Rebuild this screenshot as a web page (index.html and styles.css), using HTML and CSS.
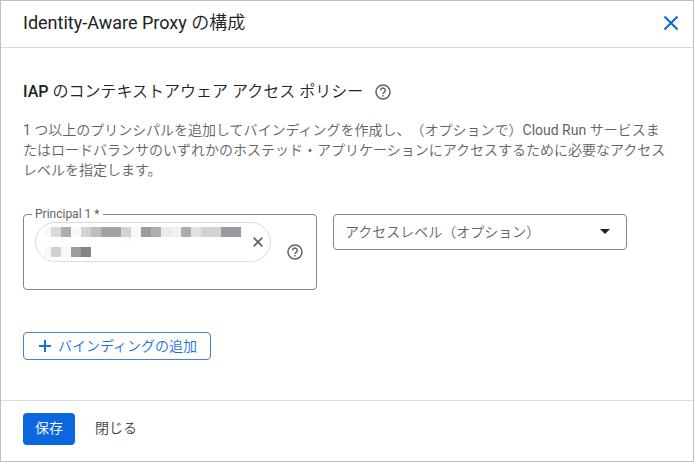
FILE: index.html
```html
<!DOCTYPE html>
<html lang="ja">
<head>
  <meta charset="UTF-8">
  <title>Identity-Aware Proxy の構成</title>
  <meta name="viewport" content="width=device-width, initial-scale=1.0">
  <link rel="stylesheet" href="styles.css">
</head>
<body>
  <form class="panel">
    <header class="panel-header">
      <h1>Identity-Aware Proxy の構成</h1>
      <button type="button" class="icon-button close" aria-label="閉じる">
        <svg width="16" height="16" viewBox="0 0 16 16"><path d="M1.5 1.5l13 13M14.5 1.5l-13 13" stroke="currentColor" stroke-width="2"/></svg>
      </button>
    </header>

    <main class="panel-body">
      <div class="section-title">
        <h2>IAP <span>のコンテキストアウェア アクセス ポリシー</span></h2>
        <button type="button" class="icon-button" aria-label="ヘルプ">
          <svg width="16" height="16" viewBox="0 0 16 16" fill="none" stroke="currentColor" stroke-width="1.5"><circle cx="8" cy="8" r="7"/><path d="M5.7 6.4a2.3 2.3 0 1 1 3.7 1.8C8.5 8.8 8 9.2 8 10.1"/><path d="M8 11v1.5"/></svg>
        </button>
      </div>
      <p class="description">1 つ以上のプリンシパルを追加してバインディングを作成し、（オプションで）Cloud Run サービスまたはロードバランサのいずれかのホステッド・アプリケーションにアクセスするために必要なアクセスレベルを指定します。</p>

      <div class="binding">
        <fieldset class="principal">
          <legend><label for="principal">Principal 1 *</label></legend>
          <div class="principal-entry">
            <div class="chip">
              <svg class="masked" width="197" height="30" viewBox="0 0 197 30" shape-rendering="crispEdges">
                <path fill="#f8f8f8" d="M0 0h7v10H0zM27 0h10v10H27zM87 0h10v10H87zM0 20h7v10H0zM17 20h10v10H17z"/>
                <path fill="#d8d9db" d="M7 0h10v10H7z"/>
                <path fill="#adaeb0" d="M17 0h10v10H17zM107 0h10v10h-10zM137 0h10v10h-10z"/>
                <path fill="#d1d2d4" d="M37 0h10v10H37zM77 0h10v10H77zM157 0h20v10h-20zM7 20h10v10H7z"/>
                <path fill="#bdbec0" d="M47 0h10v10H47z"/>
                <path fill="#a3a4a7" d="M57 0h20v10H57z"/>
                <path fill="#999da1" d="M97 0h10v10H97zM177 0h20v10h-20zM27 20h10v10H27z"/>
                <path fill="#e9eaea" d="M117 0h10v10h-10z"/>
                <path fill="#eef1f0" d="M127 0h10v10h-10z"/>
                <path fill="#e2e2e2" d="M147 0h10v10h-10z"/>
                <path fill="#fcfcfc" d="M77 10h10v9H77z"/>
                <path fill="#838689" d="M37 20h10v10H37z"/>
              </svg>
              <button type="button" class="icon-button" aria-label="削除">
                <svg width="10" height="10" viewBox="0 0 10 10"><path d="M.7.7l8.6 8.6M9.3.7L.7 9.3" stroke="currentColor" stroke-width="1.7"/></svg>
              </button>
            </div>
            <input type="text" id="principal">
          </div>
          <button type="button" class="icon-button help" aria-label="ヘルプ">
            <svg width="16" height="16" viewBox="0 0 16 16" fill="none" stroke="currentColor" stroke-width="1.5"><circle cx="8" cy="8" r="7"/><path d="M5.7 6.4a2.3 2.3 0 1 1 3.7 1.8C8.5 8.8 8 9.2 8 10.1"/><path d="M8 11v1.5"/></svg>
          </button>
        </fieldset>

        <div class="level">
          <select id="level" aria-label="アクセスレベル">
            <option>アクセスレベル（オプション）</option>
          </select>
        </div>
      </div>

      <button type="button" class="button outlined">
        <svg width="12" height="12" viewBox="0 0 12 12"><path d="M6 0v12M0 6h12" stroke="currentColor" stroke-width="2"/></svg>
        バインディングの追加
      </button>
    </main>

    <footer class="panel-footer">
      <button type="submit" class="button primary">保存</button>
      <button type="button" class="button text">閉じる</button>
    </footer>
  </form>
</body>
</html>
```
FILE: styles.css
```css
* {
  box-sizing: border-box;
}
body {
  margin: 0;
  font-family: Roboto, "Noto Sans CJK JP DemiLight", "Noto Sans CJK JP", sans-serif;
  font-size: 14px;
  line-height: 20px;
  text-spacing-trim: space-all;
  color: #202124;
  background: #fff;
}
h1, h2, p {
  margin: 0;
}
button, input, select {
  font: inherit;
}
svg {
  display: block;
}

.panel {
  display: flex;
  flex-direction: column;
  min-height: 100vh;
  border: 1px solid #bdbdbd;
}
.panel-header {
  display: flex;
  align-items: center;
  justify-content: space-between;
  padding: 10px 14px 12px 22px;
  border-bottom: 1px solid #dadada;
}
.panel-header h1 {
  font-size: 18px;
  font-weight: 400;
  line-height: 24px;
}
.panel-body {
  flex: 1;
  padding: 32px 22px 40px;
}

.icon-button {
  padding: 0;
  border: 0;
  background: none;
  color: #5f6368;
  cursor: pointer;
}
.icon-button.close {
  color: #0b66df;
}

.section-title {
  display: flex;
  align-items: center;
  gap: 12px;
  margin-bottom: 16px;
}
.section-title h2 {
  font-size: 16px;
  font-weight: 500;
  line-height: 24px;
}
.section-title span {
  font-weight: 400;
}
.description {
  color: #5f6368;
}

.binding {
  display: grid;
  grid-template-columns: 1fr 1fr;
  gap: 16px;
  max-width: 604px;
  margin: 26px 0 42px;
  align-items: end;
}
.principal {
  display: flex;
  align-items: flex-start;
  gap: 16px;
  min-width: 0;
  margin: 0;
  padding: 0 13px 0 11px;
  border: 1px solid #80868b;
  border-radius: 4px;
}
.principal legend {
  margin-left: -3px;
  padding: 0 4px 0 3px;
  font-size: 12px;
  line-height: 16px;
  color: #5f6368;
}
.principal .help {
  margin-top: 22px;
}
.principal-entry {
  flex: 1;
  min-width: 0;
}
.principal input {
  display: block;
  width: 100%;
  height: 27px;
  padding: 0;
  border: 0;
  outline: 0;
  background: none;
}
.chip {
  display: flex;
  align-items: center;
  justify-content: space-between;
  height: 40px;
  padding: 0 7px 0 8px;
  border: 1px solid #dadce0;
  border-radius: 20px;
}

.level {
  position: relative;
  align-self: start;
  padding-top: 8px;
}
.level select {
  display: block;
  width: 100%;
  height: 36px;
  padding: 0 32px 0 11px;
  border: 1px solid #80868b;
  border-radius: 4px;
  background: #fff;
  color: #5f6368;
  appearance: none;
}
.level::after {
  content: "";
  position: absolute;
  right: 17px;
  top: 23px;
  border: 5px solid transparent;
  border-top-color: #202124;
  border-bottom: 0;
  pointer-events: none;
}

.button {
  display: flex;
  align-items: center;
  height: 32px;
  padding: 0 12px 2px;
  border: 0;
  border-radius: 4px;
  background: none;
  cursor: pointer;
}
.outlined {
  gap: 7px;
  height: 28px;
  padding: 0 13px 0 15px;
  border: 1px solid #4a80d0;
  color: #1a6fe0;
}
.primary {
  background: #0b66df;
  color: #fff;
}
.text {
  padding: 0 8px 2px;
  color: #3c4043;
}

.panel-footer {
  display: flex;
  gap: 12px;
  padding: 12px 22px 16px;
  border-top: 1px solid #dadce0;
}
```
